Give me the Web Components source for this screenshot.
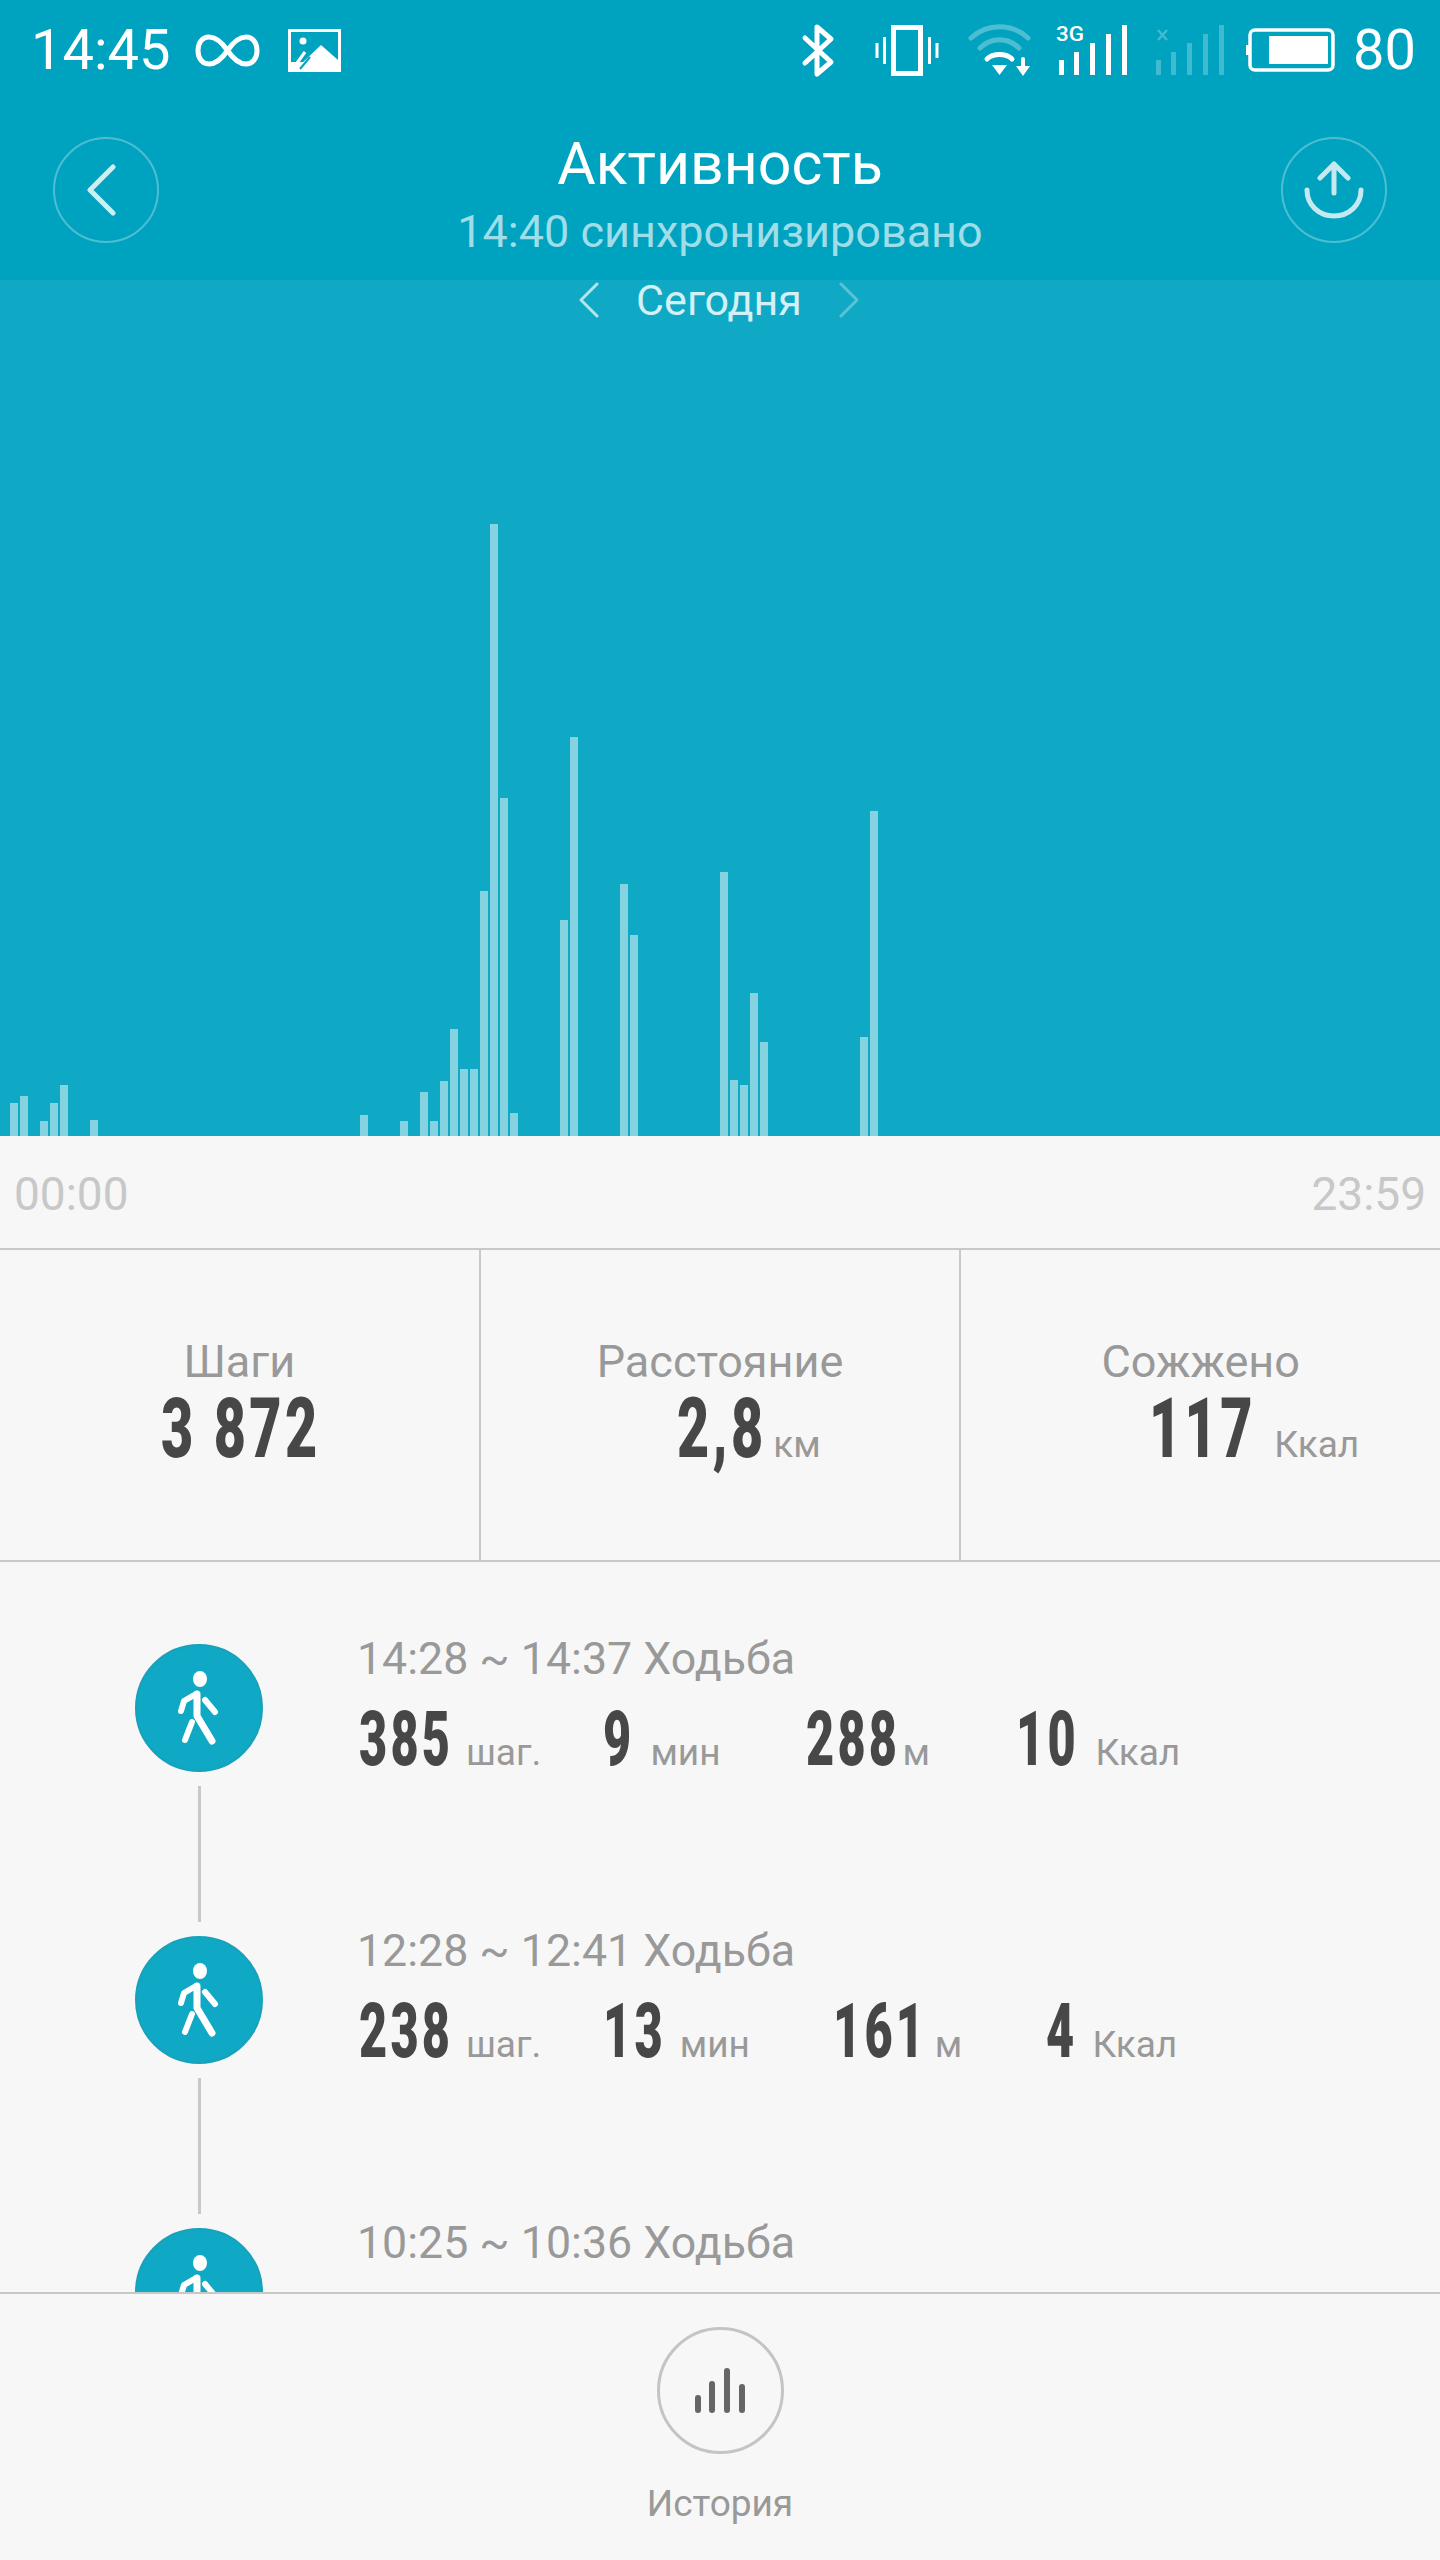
<!DOCTYPE html>
<html lang="ru">
<head>
<meta charset="utf-8">
<title>Активность</title>
<style>
  html, body { margin: 0; padding: 0; background: #f7f7f7; }
  body { font-family: Roboto, "Noto Sans", sans-serif; }
</style>
</head>
<body>
<activity-app></activity-app>
<script>
const html = String.raw;

// squeezed heavy digits, the app uses a condensed face that is not installed
class CondNum extends HTMLElement {
  constructor() {
    super();
    this.shadow = this.attachShadow({ mode: "open" });
  }

  connectedCallback() {
    const size = this.getAttribute("size") || 76;
    const sx = parseFloat(this.getAttribute("sx") || 0.64);
    const track = this.getAttribute("track") || 5;
    this.shadow.innerHTML = html`
      <style>
        :host { display: inline-block; color: #474747; line-height: 70px; }
        span {
          display: inline-block;
          white-space: pre;
          font: 900 ${size}px/70px Roboto, sans-serif;
          letter-spacing: ${track}px;
          transform: scaleX(${sx});
          transform-origin: left center;
        }
      </style>
      <span>${this.getAttribute("value")}</span>
    `;
    const w = this.shadow.querySelector("span").offsetWidth - track;
    this.style.width = w * sx + "px";
  }
}

class StatusBar extends HTMLElement {
  constructor() {
    super();
    this.shadow = this.attachShadow({ mode: "open" });
  }

  connectedCallback() {
    this.shadow.innerHTML = html`
      <style>
        :host {
          display: flex;
          align-items: center;
          height: 100px;
          padding: 0 24px 0 31px;
          color: #fff;
          font: 400 56px/100px Roboto, sans-serif;
        }
        svg { display: block; flex: none; overflow: visible; }
        .grow { flex: 1; }
      </style>
      <span>14:45</span>
      <svg style="margin-left:25px" width="65" height="33" viewBox="0 0 65 33" fill="none" stroke="#fff" stroke-width="5">
        <path d="M32.5 16.5C26 7 20 3 14 3 7 3 3 9 3 16.5 3 24 7 30 14 30c6 0 12-4 18.5-13.500C39 7 45 3 51 3c7 0 11 6 11 13.500C62 24 58 30 51 30c-6 0-12-4-18.500-13.500z"/>
      </svg>
      <svg style="margin-left:28px" width="53" height="43" viewBox="0 0 53 43">
        <rect width="53" height="43" fill="#fff"/>
        <rect x="3" y="3" width="47" height="30" fill="#00a3bf"/>
        <path d="M12 36 33 16 50 31V36Z" fill="#fff"/>
        <circle cx="15" cy="12" r="3.500" fill="#fff"/>
        <path d="M9 34 17 23" stroke="#fff" stroke-width="3"/>
        <path d="M12 40 22 28" stroke="#00a3bf" stroke-width="2"/>
      </svg>
      <span class="grow"></span>
      <svg width="32" height="53" viewBox="0 0 32 53" fill="none" stroke="#fff" stroke-width="5" stroke-linecap="round" stroke-linejoin="round">
        <path d="M3 14 29 38 15 50V3L29 15 3 39"/>
      </svg>
      <svg style="margin-left:41px" width="64" height="51" viewBox="0 0 64 51" fill="none" stroke="#fff">
        <rect x="18.500" y="2.500" width="27" height="46" stroke-width="5"/>
        <path d="M2 18V33M62 18V33M9.500 12V39M54.500 12V39" stroke-width="3"/>
      </svg>
      <svg style="margin-left:29px" width="63" height="52" viewBox="0 0 63 52" fill="none" stroke="#fff" stroke-width="5" stroke-linecap="round">
        <path opacity=".3" d="M3 14C19 -1 44 -1 60 14"/>
        <path opacity=".3" d="M12 24C23 13 40 13 51 24"/>
        <path d="M19 35C25 29 38 29 44 35"/>
        <path d="M24 41H39L31.500 51Z" fill="#fff" stroke="none"/>
        <path d="M55 35V47" stroke-width="4"/>
        <path d="M48 42H62L55 52Z" fill="#fff" stroke="none"/>
      </svg>
      <svg style="margin-left:25px" width="73" height="50" viewBox="0 0 73 50" fill="#fff">
        <text x="0" y="16" font-family="Roboto, sans-serif" font-weight="500" font-size="21" textLength="28" lengthAdjust="spacingAndGlyphs">3G</text>
        <rect x="3" y="35" width="5" height="15"/>
        <rect x="18" y="27" width="5" height="23"/>
        <rect x="34" y="18" width="5" height="32"/>
        <rect x="50" y="9" width="5" height="41"/>
        <rect x="66" y="0" width="5" height="50"/>
      </svg>
      <svg style="margin-left:26px" width="70" height="50" viewBox="0 0 70 50" fill="#fff" opacity=".25">
        <path d="M3 5 12 15M12 5 3 15" stroke="#fff" stroke-width="2.500"/>
        <rect x="1" y="35" width="5" height="15"/>
        <rect x="16" y="27" width="5" height="23"/>
        <rect x="32" y="18" width="5" height="32"/>
        <rect x="48" y="9" width="5" height="41"/>
        <rect x="64" y="0" width="5" height="50"/>
      </svg>
      <svg style="margin-left:21px" width="89" height="44" viewBox="0 0 89 44">
        <rect x="4" y="2" width="83" height="40" rx="5" fill="none" stroke="#fff" stroke-width="3.500"/>
        <rect x="0" y="17" width="3" height="10" fill="#fff"/>
        <rect x="23" y="8" width="59" height="28" fill="#fff"/>
      </svg>
      <span style="margin-left:18px">80</span>
    `;
  }
}

class RoundBtn extends HTMLElement {
  constructor() {
    super();
    this.shadow = this.attachShadow({ mode: "open" });
  }

  connectedCallback() {
    this.shadow.innerHTML = html`
      <style>
        :host {
          display: flex;
          flex: none;
          align-items: center;
          justify-content: center;
          box-sizing: border-box;
          width: var(--btn-size, 106px);
          height: var(--btn-size, 106px);
          border-radius: 50%;
          border: var(--btn-border, 2px solid rgba(255, 255, 255, 0.3));
        }
      </style>
      <slot></slot>
    `;
  }
}

class NavHeader extends HTMLElement {
  constructor() {
    super();
    this.shadow = this.attachShadow({ mode: "open" });
  }

  connectedCallback() {
    this.shadow.innerHTML = html`
      <style>
        :host {
          display: flex;
          align-items: center;
          justify-content: space-between;
          height: 180px;
          padding: 0 53px;
          color: #fff;
        }
        .mid {
          display: flex;
          flex-direction: column;
          align-items: center;
          align-self: flex-start;
          padding-top: 34px;
        }
        h1 { margin: 0; font: 400 59px/60px Roboto, sans-serif; }
        p { margin: 13px 0 0; font: 400 45px/50px Roboto, sans-serif; color: #9fdde8; white-space: nowrap; }
        svg { display: block; }
        .back { margin-left: -10px; }
      </style>
      <round-btn>
        <svg class="back" width="30" height="52" viewBox="0 0 30 52" fill="none" stroke="#cdeef3" stroke-width="5" stroke-linecap="round" stroke-linejoin="round">
          <path d="M27 3 4 26 27 49"/>
        </svg>
      </round-btn>
      <div class="mid">
        <h1>Активность</h1>
        <p>14:40 синхронизировано</p>
      </div>
      <round-btn>
        <svg width="60" height="58" viewBox="0 0 60 58" fill="none" stroke="#c4e9f0" stroke-width="5" stroke-linecap="round" stroke-linejoin="round">
          <path d="M30 32V3M16 17 30 3 44 17"/>
          <path d="M3 29C3 44 15 55 30 55S57 44 57 29"/>
        </svg>
      </round-btn>
    `;
  }
}

class DayChart extends HTMLElement {
  constructor() {
    super();
    this.shadow = this.attachShadow({ mode: "open" });
    // 10 minute slot -> bar height
    this.bars = {
      1: 33, 2: 40, 4: 15, 5: 33, 6: 51, 9: 16, 36: 21, 40: 15, 42: 44, 43: 15,
      44: 55, 45: 107, 46: 67, 47: 67, 48: 245, 49: 612, 50: 338, 51: 23,
      56: 216, 57: 399, 62: 252, 63: 201, 72: 264, 73: 56, 74: 51, 75: 143,
      76: 94, 86: 99, 87: 325,
    };
  }

  connectedCallback() {
    let cols = "";
    for (let i = 0; i < 144; i++) {
      cols += `<i style="height:${this.bars[i] || 0}px"></i>`;
    }
    this.shadow.innerHTML = html`
      <style>
        :host {
          display: flex;
          flex-direction: column;
          height: 856px;
          background: #0fa9c5;
          color: #d4f0f5;
        }
        .day {
          display: flex;
          align-items: center;
          justify-content: center;
          height: 40px;
          font: 400 43px/40px Roboto, sans-serif;
        }
        .day span { margin: 0 37px; }
        .day svg:first-child { margin-left: -2px; }
        svg { display: block; }
        .bars { flex: 1; display: flex; align-items: flex-end; }
        i { display: block; flex: none; width: 8px; margin-right: 2px; background: #85d3e1; }
      </style>
      <div class="day">
        <svg width="20" height="36" viewBox="0 0 20 36" fill="none" stroke="#b5e4ed" stroke-width="3" stroke-linecap="round" stroke-linejoin="round"><path d="M18 2 2 18 18 34"/></svg>
        <span>Сегодня</span>
        <svg width="20" height="36" viewBox="0 0 20 36" fill="none" stroke="#5cc3d6" stroke-width="3" stroke-linecap="round" stroke-linejoin="round"><path d="M2 2 18 18 2 34"/></svg>
      </div>
      <div class="bars">${cols}</div>
    `;
  }
}

class TimeAxis extends HTMLElement {
  constructor() {
    super();
    this.shadow = this.attachShadow({ mode: "open" });
  }

  connectedCallback() {
    this.shadow.innerHTML = html`
      <style>
        :host {
          display: flex;
          justify-content: space-between;
          height: 112px;
          padding: 28px 14px 0;
          box-sizing: border-box;
          color: #c8c8c8;
          font: 400 46px/60px Roboto, sans-serif;
        }
      </style>
      <span>00:00</span>
      <span>23:59</span>
    `;
  }
}

class StatCell extends HTMLElement {
  constructor() {
    super();
    this.shadow = this.attachShadow({ mode: "open" });
  }

  connectedCallback() {
    const unit = this.getAttribute("unit");
    const gap = this.getAttribute("gap") || 0;
    this.shadow.innerHTML = html`
      <style>
        :host {
          display: flex;
          flex: 1;
          flex-direction: column;
          align-items: center;
          padding-top: 87px;
          box-sizing: border-box;
          color: #999;
        }
        .label { font: 400 45px/50px Roboto, sans-serif; }
        .val { display: flex; align-items: baseline; margin-top: 7px; height: 70px; }
        /* unit hangs off the number, the number alone is centred */
        .unit {
          width: 0;
          margin-left: ${gap}px;
          margin-right: -${gap}px;
          font: 400 37px/70px Roboto, sans-serif;
          white-space: nowrap;
        }
      </style>
      <div class="label">${this.getAttribute("label")}</div>
      <div class="val">
        <cond-num size="83" sx="0.67" value="${this.getAttribute("value")}"></cond-num>
        ${unit ? `<span class="unit">${unit}</span>` : ""}
      </div>
    `;
  }
}

class StatRow extends HTMLElement {
  constructor() {
    super();
    this.shadow = this.attachShadow({ mode: "open" });
  }

  connectedCallback() {
    this.shadow.innerHTML = html`
      <style>
        :host {
          display: flex;
          height: 314px;
          box-sizing: border-box;
          border-top: 2px solid #c8c8c8;
          border-bottom: 2px solid #c8c8c8;
        }
        stat-cell + stat-cell { border-left: 2px solid #c8c8c8; }
      </style>
      <stat-cell label="Шаги" value="3 872"></stat-cell>
      <stat-cell label="Расстояние" value="2,8" unit="км" gap="10"></stat-cell>
      <stat-cell label="Сожжено" value="117" unit="Ккал" gap="22"></stat-cell>
    `;
  }
}

// value, unit, gap to unit, gap to next
class ActivityRow extends HTMLElement {
  constructor() {
    super();
    this.shadow = this.attachShadow({ mode: "open" });
  }

  connectedCallback() {
    const stats = JSON.parse(this.getAttribute("stats") || "[]");
    const items = stats
      .map(
        ([v, u, g, n]) => `
        <cond-num size="76" value="${v}"></cond-num>
        <span class="u" style="margin:0 ${n}px 0 ${g}px">${u}</span>`
      )
      .join("");
    this.shadow.innerHTML = html`
      <style>
        :host {
          display: flex;
          flex: none;
          height: 292px;
          color: #999;
        }
        .side {
          display: flex;
          flex: none;
          flex-direction: column;
          align-items: center;
          width: 128px;
          margin: 0 94px 0 135px;
        }
        .dot {
          flex: none;
          box-sizing: border-box;
          width: 128px;
          height: 128px;
          border-radius: 50%;
          background: #0fa9c5;
          border: 2px solid #19a0ba;
        }
        .dot svg { display: block; margin: -2px; }
        .line { width: 3px; height: 136px; margin-top: 14px; background: #c8c8c8; }
        .txt { margin-top: -10px; }
        .title { font: 400 44.700px/50px Roboto, sans-serif; white-space: nowrap; }
        .nums { display: flex; align-items: baseline; margin: 20px 0 0 2px; height: 70px; }
        .u { font: 400 37px/70px Roboto, sans-serif; white-space: nowrap; }
      </style>
      <div class="side">
        <div class="dot">
          <svg width="128" height="128" viewBox="0 0 128 128" fill="none" stroke="#fff" stroke-linecap="round" stroke-linejoin="round">
            <ellipse cx="65" cy="35" rx="7" ry="8" fill="#fff" stroke="none"/>
            <path d="M62 50V72L77 97" stroke-width="7"/>
            <path d="M61 50 49 57 46 67" stroke-width="6"/>
            <path d="M70 56 80 68" stroke-width="6"/>
            <path d="M57 78 50 96" stroke-width="6"/>
          </svg>
        </div>
        <div class="line"></div>
      </div>
      <div class="txt">
        <div class="title">${this.getAttribute("title-text")}</div>
        <div class="nums">${items}</div>
      </div>
    `;
  }
}

class ActivityList extends HTMLElement {
  constructor() {
    super();
    this.shadow = this.attachShadow({ mode: "open" });
  }

  connectedCallback() {
    this.shadow.innerHTML = html`
      <style>
        :host {
          display: flex;
          flex-direction: column;
          height: 730px;
          padding-top: 82px;
          box-sizing: border-box;
          overflow: hidden;
        }
      </style>
      <slot></slot>
    `;
  }
}

class BottomTab extends HTMLElement {
  constructor() {
    super();
    this.shadow = this.attachShadow({ mode: "open" });
  }

  connectedCallback() {
    this.shadow.innerHTML = html`
      <style>
        :host {
          display: flex;
          flex: 1;
          flex-direction: column;
          align-items: center;
          padding-top: 33px;
          border-top: 2px solid #c8c8c8;
          color: #999;
          --btn-size: 127px;
          --btn-border: 3px solid #c4c4c4;
        }
        svg { display: block; }
        span { margin-top: 25px; font: 400 37px/50px Roboto, sans-serif; }
      </style>
      <round-btn>
        <svg width="50" height="46" viewBox="0 0 50 46" fill="#666">
          <rect x="0" y="27" width="6" height="18" rx="3"/>
          <rect x="14" y="13" width="6" height="32" rx="3"/>
          <rect x="29" y="0" width="6" height="45" rx="3"/>
          <rect x="44" y="16" width="6" height="29" rx="3"/>
        </svg>
      </round-btn>
      <span>История</span>
    `;
  }
}

class ActivityApp extends HTMLElement {
  constructor() {
    super();
    this.shadow = this.attachShadow({ mode: "open" });
  }

  connectedCallback() {
    this.shadow.innerHTML = html`
      <style>
        :host {
          display: flex;
          flex-direction: column;
          width: 1440px;
          height: 2560px;
          overflow: hidden;
          background: #f7f7f7;
          font-family: Roboto, "Noto Sans", sans-serif;
        }
        .top { background: #00a3bf; }
      </style>
      <div class="top">
        <status-bar></status-bar>
        <nav-header></nav-header>
      </div>
      <day-chart></day-chart>
      <time-axis></time-axis>
      <stat-row></stat-row>
      <activity-list>
        <activity-row title-text="14:28 ~ 14:37 Ходьба"
          stats='[["385","шаг.",16,62],["9","мин",19,85],["288","м",6,86],["10","Ккал",20,0]]'></activity-row>
        <activity-row title-text="12:28 ~ 12:41 Ходьба"
          stats='[["238","шаг.",16,62],["13","мин",17,83],["161","м",11,84],["4","Ккал",18,0]]'></activity-row>
        <activity-row title-text="10:25 ~ 10:36 Ходьба"></activity-row>
      </activity-list>
      <bottom-tab></bottom-tab>
    `;
  }
}

customElements.define("cond-num", CondNum);
customElements.define("status-bar", StatusBar);
customElements.define("round-btn", RoundBtn);
customElements.define("nav-header", NavHeader);
customElements.define("day-chart", DayChart);
customElements.define("time-axis", TimeAxis);
customElements.define("stat-cell", StatCell);
customElements.define("stat-row", StatRow);
customElements.define("activity-row", ActivityRow);
customElements.define("activity-list", ActivityList);
customElements.define("bottom-tab", BottomTab);
customElements.define("activity-app", ActivityApp);
</script>
</body>
</html>
